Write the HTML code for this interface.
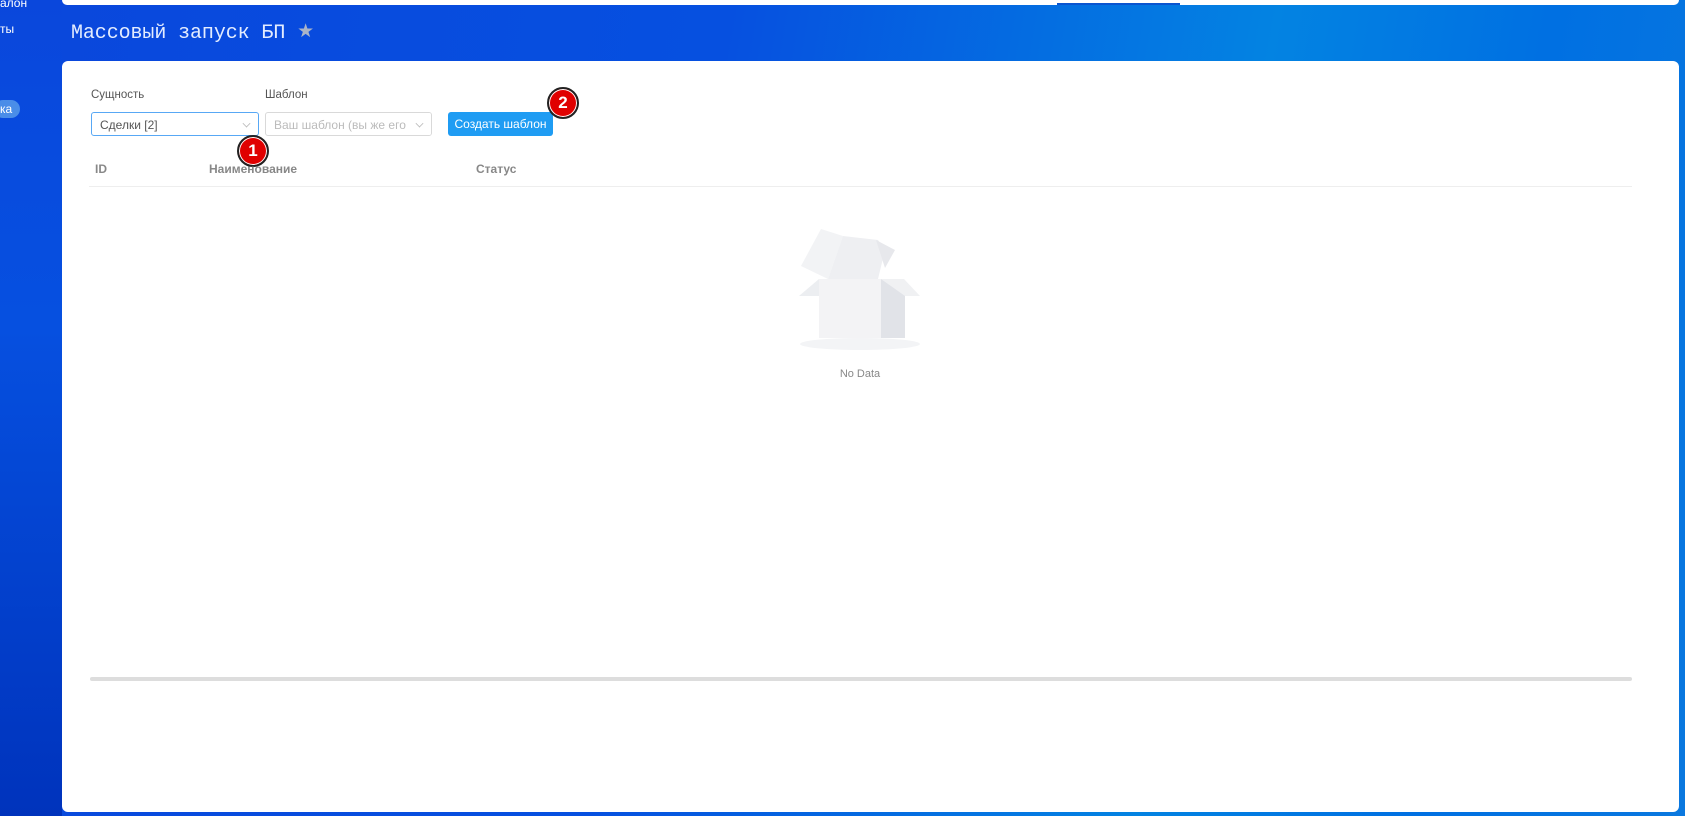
<!DOCTYPE html>
<html><head><meta charset="utf-8"><style>
*{box-sizing:border-box;margin:0;padding:0}
body{width:1685px;height:816px;overflow:hidden;position:relative;font-family:"Liberation Sans",sans-serif;background:linear-gradient(100deg,#0a47dc 0%,#0650e0 40%,#0383e2 70%,#0070e2 85%,#0a78df 100%)}
.bl{position:absolute;left:0;top:0;width:62px;height:816px;background:linear-gradient(180deg,#0a47dc 0%,#0650e0 40%,#0033bc 100%)}
.topbar{position:absolute;left:62px;top:0;width:1617px;height:5px;background:#fff;border-radius:0 0 6px 6px}
.tab{position:absolute;left:1057px;top:3px;width:123px;height:2px;background:#0b55d0}
.side{position:absolute;color:#fff;font-size:12px}
.title{position:absolute;left:71px;top:21px;color:#e3ecff;font-family:"Liberation Mono",monospace;font-size:20px;letter-spacing:-0.1px}
.card{position:absolute;left:62px;top:61px;width:1617px;height:751px;background:#fff;border-radius:6px}
.lbl{position:absolute;font-size:11.5px;color:#555;top:89px}
.sel{position:absolute;top:112px;height:24px;border:1px solid #d9d9d9;border-radius:3px;font-size:12px;padding:5px 8px;color:#555;background:#fff}
.chev{position:absolute;right:8px;top:7px;width:7px;height:7px;border-right:1px solid #bbb;border-bottom:1px solid #bbb;transform:rotate(45deg) scale(.8)}
.btn{position:absolute;left:448px;top:112px;width:105px;height:24px;background:#1f9cf3;border-radius:3px;color:#fff;font-size:12px;text-align:center;line-height:24px}
.badge{position:absolute;width:32px;height:32px;border-radius:50%;background:#e00000;border:2px solid #222;box-shadow:0 0 0 1px #fff inset;color:#fff;font-weight:bold;font-size:17px;text-align:center;line-height:28px}
.th{position:absolute;top:162px;font-size:12px;color:#888;font-weight:bold}
</style></head><body>
<div class="bl"></div>
<div class="topbar"></div><div class="tab"></div>
<div class="side" style="left:0;top:-4px">алон</div>
<div class="side" style="left:0;top:22px">ты</div>
<div class="side" style="left:-6px;top:100px;background:#4a8de8;border-radius:10px;padding:2px 8px 2px 6px;font-size:12px">ка</div>
<div class="title">Массовый запуск БП <span style="color:#aab4c8;font-size:19px;font-family:'DejaVu Sans',sans-serif;position:relative;top:-1px">★</span></div>
<div class="card"></div>
<div class="lbl" style="left:91px">Сущность</div>
<div class="lbl" style="left:265px">Шаблон</div>
<div class="sel" style="left:91px;width:168px;border-color:#58a8f5">Сделки [2]<span class="chev"></span></div>
<div class="sel" style="left:265px;width:167px;color:#bbb;overflow:hidden;white-space:nowrap">Ваш шаблон (вы же его соз<span style="position:absolute;right:0;top:0;width:24px;height:22px;background:#fff"></span><span class="chev"></span></div>
<div class="btn">Создать шаблон</div>
<div class="badge" style="left:237px;top:135px">1</div>
<div class="badge" style="left:547px;top:87px">2</div>
<div class="th" style="left:95px">ID</div>
<div class="th" style="left:209px">Наименование</div>
<div class="th" style="left:476px">Статус</div>
<div style="position:absolute;left:89px;top:186px;width:1543px;height:1px;background:#eee"></div>
<svg style="position:absolute;left:798px;top:226px" width="124" height="126" viewBox="0 0 124 126">
<ellipse cx="62" cy="118" rx="60" ry="6" fill="#f3f4f6"/>
<polygon points="21,53 1,70 21,70" fill="#eceef1"/>
<polygon points="3,40 23,3 45,10 30,53" fill="#f2f3f5"/>
<polygon points="30,53 45,10 80,14 87,24 80,53" fill="#eeeff2"/>
<polygon points="78,14 97,24 87,42" fill="#e7e8ec"/>
<rect x="21" y="53" width="62" height="59" fill="#f3f3f5"/>
<polygon points="83,53 107,68 107,112 83,112" fill="#e1e3e8"/>
<polygon points="83,53 106,53 122,70 107,70" fill="#f0f1f3"/>
</svg>
<div style="position:absolute;left:830px;top:368px;width:60px;text-align:center;font-size:11px;color:#888">No Data</div>
<div style="position:absolute;left:90px;top:677px;width:1542px;height:4px;background:#ddd;border-radius:2px"></div>
</body></html>
